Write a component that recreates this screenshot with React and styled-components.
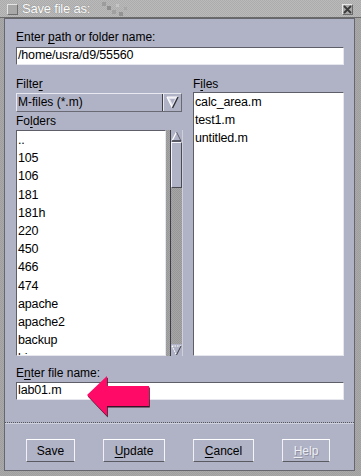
import React from 'react';
import styled, { createGlobalStyle } from 'styled-components';

const LAV = '#b0b3c6';

const Global = createGlobalStyle`
  html, body { margin: 0; padding: 0; background: #a6a6a6; }
  body { font-family: "Liberation Sans", Arial, sans-serif; }
  * { box-sizing: border-box; }
`;

const Window = styled.div`
  width: 361px;
  height: 476px;
  display: flex;
  flex-direction: column;
  background-color: #a4a4a4;
  background-image: repeating-conic-gradient(#a9a9a9 0 25%, #9f9f9f 0 50%);
  background-size: 2px 2px;
  padding: 0 6px 5px 4px;
  overflow: hidden;
`;

const TitleBar = styled.div`
  height: 18px;
  margin: 0 -6px 0 -4px;
  display: flex;
  align-items: flex-start;
  padding: 4px 7px 0 7px;
  background-color: #b4b4b4;
  background-image: repeating-conic-gradient(#bababa 0 25%, #acacac 0 50%);
  background-size: 2px 2px;
  border-bottom: 1px solid #6a6a6a;
  position: relative;
`;

const TitleBox = styled.div`
  width: 11px;
  height: 11px;
  background: #a8a8a8;
  border-top: 1px solid #e4e4e4;
  border-left: 1px solid #e4e4e4;
  border-right: 1px solid #6e6e6e;
  border-bottom: 1px solid #6e6e6e;
  flex: none;
`;

const TitleText = styled.div`
  margin-left: 4px;
  margin-top: -3px;
  font-size: 13px;
  line-height: 16px;
  color: #ffffff;
  letter-spacing: -0.2px;
  text-shadow: 0 0 1px #6e6e6e;
`;

const TitleSpacer = styled.div`
  flex: 1;
`;

const Noise = styled.svg`
  position: absolute;
  left: 98px;
  top: 0;
`;

const CloseBox = styled.div`
  width: 11px;
  height: 11px;
  background: #a9a9a9;
  border-top: 1px solid #e8e8e8;
  border-left: 1px solid #e8e8e8;
  border-right: 1px solid #6a6a6a;
  border-bottom: 1px solid #6a6a6a;
  display: flex;
  align-items: center;
  justify-content: center;
  margin-right: 1px;
`;

const Dialog = styled.div`
  flex: 1;
  position: relative;
  display: flex;
  flex-direction: column;
  background: ${LAV};
  border: 1px solid #66666e;
`;

const Content = styled.div`
  display: flex;
  flex-direction: column;
  padding: 11px 10px 22px 11px;
`;

const Label = styled.div`
  font-size: 12px;
  line-height: 15px;
  color: #000;
  margin-top: ${(p) => p.$mt || 0}px;
  white-space: nowrap;
`;

const U = styled.span`
  text-decoration: underline;
  text-underline-offset: 2px;
  text-decoration-thickness: 1px;
`;

const TextField = styled.div`
  height: 18px;
  margin-top: ${(p) => p.$mt || 0}px;
  background: #fff;
  border-top: 1px solid #5e5e68;
  border-left: 1px solid #5e5e68;
  border-right: 1px solid #e6e6ee;
  border-bottom: 1px solid #e6e6ee;
  padding: 0 1px;
  font-size: 12.5px;
  letter-spacing: -0.15px;
  line-height: 15px;
  color: #000;
  white-space: nowrap;
`;

const Columns = styled.div`
  margin-top: 12px;
  height: 279px;
  display: grid;
  grid-template-columns: 166px 151px;
  column-gap: 11px;
`;

const Column = styled.div`
  display: flex;
  flex-direction: column;
  min-height: 0;
`;

const Select = styled.div`
  height: 19px;
  margin-top: 1px;
  margin-bottom: 2px;
  display: flex;
  align-items: stretch;
  background: ${LAV};
  border-top: 1px solid #e8e8f0;
  border-left: 1px solid #e8e8f0;
  border-right: 1px solid #6a6a74;
  border-bottom: 1px solid #6a6a74;
`;

const SelectText = styled.div`
  flex: 1;
  font-size: 12px;
  line-height: 17px;
  padding-left: 1px;
  color: #000;
  white-space: nowrap;
`;

const SelectButton = styled.div`
  width: 19px;
  border-left: 1px solid #3e3e46;
  box-shadow: inset 1px 0 0 #e8e8f0;
  display: flex;
  align-items: center;
  justify-content: center;
`;

const ListRow = styled.div`
  flex: 1;
  min-height: 0;
  margin-top: ${(p) => p.$mt || 0}px;
  display: flex;
`;

const List = styled.div`
  flex: 1;
  min-width: 0;
  background: #fff;
  border-top: 1px solid #5e5e68;
  border-left: 1px solid #5e5e68;
  border-right: 1px solid #e6e6ee;
  border-bottom: 1px solid #e6e6ee;
  overflow: hidden;
  padding: 0 1px;
`;

const Item = styled.div`
  font-size: 12.5px;
  letter-spacing: -0.15px;
  line-height: ${(p) => p.$lh || 18}px;
  color: #000;
  white-space: nowrap;
`;

const ScrollBar = styled.div`
  width: 16px;
  display: flex;
  background-color: #a0a0a0;
  background-image: repeating-conic-gradient(#a6a6a6 0 25%, #979797 0 50%);
  background-size: 2px 2px;
  padding-left: 4px;
`;

const Track = styled.div`
  flex: 1;
  display: flex;
  flex-direction: column;
  border-left: 1px solid #3c3c44;
  border-right: 1px solid #cfd0dc;
`;

const ArrowBtn = styled.div`
  height: 12px;
  background: ${LAV};
  display: flex;
  align-items: center;
  justify-content: center;
  flex: none;
`;

const Thumb = styled.div`
  height: 46px;
  background: ${LAV};
  border-left: 1px solid #f4f4fa;
  border-top: 1px solid #f4f4fa;
  border-bottom: 1px solid #4a4a52;
  border-right: 1px solid #4a4a52;
  flex: none;
`;

const TrackFill = styled.div`
  flex: 1;
`;

const Separator = styled.div`
  height: 2px;
  border-top: 1px dotted #55555e;
  border-bottom: 1px solid #cfd1de;
`;

const ButtonRow = styled.div`
  display: flex;
  gap: 28px;
  padding: 15px 0 0 21px;
`;

const Button = styled.div`
  width: ${(p) => p.$w}px;
  height: 23px;
  display: flex;
  align-items: center;
  justify-content: center;
  font-size: 12px;
  color: ${(p) => (p.$disabled ? '#eeeef4' : '#000')};
  text-shadow: ${(p) => (p.$disabled ? '1px 1px 0 #8e909e' : 'none')};
  border-top: 1px solid #ffffff;
  border-left: 1px solid #f0f0f6;
  border-right: 1px solid #f6f6fa;
  border-bottom: 1px solid #5a5a62;
  white-space: nowrap;
`;

const Pointer = styled.svg`
  position: absolute;
  left: 77px;
  top: 353px;
  pointer-events: none;
`;

const folders = ['..', '105', '106', '181', '181h', '220', '450', '466', '474', 'apache', 'apache2', 'backup', 'bin'];
const files = ['calc_area.m', 'test1.m', 'untitled.m'];

const arrowPts = '5,23 25,4 25,14 67,14 67,34 25,34 25,44';

export default function App() {
  return (
    <>
      <Global />
      <Window>
        <TitleBar>
          <TitleBox />
          <TitleText>Save file as:</TitleText>
          <Noise width="34" height="18" viewBox="0 0 34 18">
            <rect x="4" y="2" width="4" height="4" fill="#9c9c9c" />
            <rect x="9" y="6" width="4" height="4" fill="#8e8e8e" />
            <rect x="14" y="10" width="4" height="4" fill="#a0a0a0" />
            <rect x="18" y="4" width="3" height="3" fill="#c4c4c4" />
            <rect x="21" y="12" width="4" height="4" fill="#939393" />
            <rect x="26" y="7" width="3" height="3" fill="#a7a7a7" />
          </Noise>
          <TitleSpacer />
          <CloseBox>
            <svg width="9" height="9" viewBox="0 0 9 9">
              <path d="M1 1 L8 8 M8 1 L1 8" stroke="#3a3a3a" strokeWidth="1.8" />
            </svg>
          </CloseBox>
        </TitleBar>
        <Dialog>
          <Content>
            <Label>
              Enter <U>p</U>ath or folder name:
            </Label>
            <TextField $mt={2}>/home/usra/d9/55560</TextField>
            <Columns>
              <Column>
                <Label>
                  Filte<U>r</U>
                </Label>
                <Select>
                  <SelectText>M-files (*.m)</SelectText>
                  <SelectButton>
                    <svg width="13" height="13" viewBox="0 0 13 13">
                      <polygon points="1,1 12,1 6.5,12" fill="#e2e3ec" />
                      <path d="M1 1 L12 1 M1 1 L6.5 12" stroke="#ffffff" strokeWidth="1.2" fill="none" />
                      <path d="M12 1 L6.5 12" stroke="#2e2e36" strokeWidth="1.4" fill="none" />
                      <polygon points="4,3 9,3 6.5,8" fill={LAV} />
                    </svg>
                  </SelectButton>
                </Select>
                <Label>
                  Fo<U>l</U>ders
                </Label>
                <ListRow $mt={1}>
                  <List>
                    {folders.map((f) => (
                      <Item key={f} $lh={18.2}>
                        {f}
                      </Item>
                    ))}
                  </List>
                  <ScrollBar>
                    <Track>
                      <ArrowBtn>
                        <svg width="11" height="11" viewBox="0 0 11 11">
                          <path d="M5.5 1 L1 10" stroke="#ffffff" strokeWidth="1.2" fill="none" />
                          <path d="M5.5 1 L10 10" stroke="#60606a" strokeWidth="1" fill="none" />
                          <path d="M1 10 L10 10" stroke="#2e2e36" strokeWidth="1.4" fill="none" />
                        </svg>
                      </ArrowBtn>
                      <Thumb />
                      <TrackFill />
                      <ArrowBtn>
                        <svg width="11" height="11" viewBox="0 0 11 11">
                          <path d="M1 1 L10 1 M1 1 L5.5 10" stroke="#ffffff" strokeWidth="1.2" strokeDasharray="1.5 1" fill="none" />
                          <path d="M10 1 L5.5 10" stroke="#3a3a42" strokeWidth="1" fill="none" />
                        </svg>
                      </ArrowBtn>
                    </Track>
                  </ScrollBar>
                </ListRow>
              </Column>
              <Column>
                <Label>
                  F<U>i</U>les
                </Label>
                <ListRow>
                  <List>
                    {files.map((f) => (
                      <Item key={f}>{f}</Item>
                    ))}
                  </List>
                </ListRow>
              </Column>
            </Columns>
            <Label $mt={10}>
              E<U>n</U>ter file name:
            </Label>
            <TextField $mt={1}>lab01.m</TextField>
          </Content>
          <Separator />
          <ButtonRow>
            <Button $w={49}>Save</Button>
            <Button $w={62}>
              <span>
                <U>U</U>pdate
              </span>
            </Button>
            <Button $w={61}>
              <span>
                <U>C</U>ancel
              </span>
            </Button>
            <Button $w={48} $disabled>
              <span>
                <U>H</U>elp
              </span>
            </Button>
          </ButtonRow>
          <Pointer width="72" height="48" viewBox="0 0 72 48">
            <polygon points={arrowPts} fill="#3a1426" transform="translate(0.8,1.4)" />
            <polygon points={arrowPts} fill="#ff0a66" />
          </Pointer>
        </Dialog>
      </Window>
    </>
  );
}
